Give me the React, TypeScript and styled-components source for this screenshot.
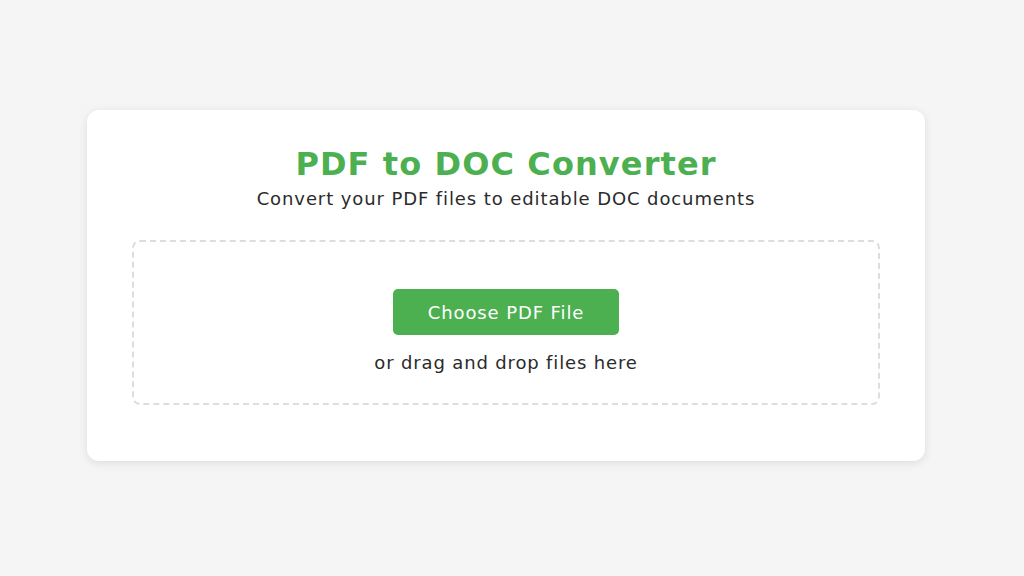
import React from 'react';
import styled, { createGlobalStyle } from 'styled-components';

const GlobalStyle = createGlobalStyle`
  html, body {
    margin: 0;
    padding: 0;
    background: #f5f5f5;
    font-family: "DejaVu Sans", "Open Sans", sans-serif;
  }
`;

const Page = styled.div`
  height: 576px;
  box-sizing: border-box;
  padding: 110px 99px 0 87px;
`;

const Card = styled.div`
  background: #fff;
  border-radius: 12px;
  box-shadow: 0 2px 10px rgba(0, 0, 0, 0.1);
  height: 351px;
  box-sizing: border-box;
  padding: 34px 45px 0;
  display: flex;
  flex-direction: column;
  align-items: center;
`;

const Title = styled.h1`
  margin: 0;
  color: #4caf50;
  font-size: 32px;
  font-weight: 700;
  line-height: 40px;
  letter-spacing: 1.1px;
`;

const Subtitle = styled.p`
  margin: 3px 0 0;
  color: #2b2b2b;
  font-size: 18px;
  line-height: 24px;
  letter-spacing: 0.9px;
`;

const DropZone = styled.div`
  margin-top: 29px;
  align-self: stretch;
  height: 165px;
  box-sizing: border-box;
  border: 2px dashed #ddd;
  border-radius: 8px;
  display: flex;
  flex-direction: column;
  align-items: center;
  padding-top: 47px;
`;

const ChooseButton = styled.button`
  width: 226px;
  height: 46px;
  border: none;
  border-radius: 5px;
  background: #4caf50;
  color: #fff;
  font-family: inherit;
  font-size: 18px;
  letter-spacing: 0.9px;
  cursor: pointer;
`;

const Hint = styled.p`
  margin: 16px 0 0;
  color: #2b2b2b;
  font-size: 18px;
  line-height: 24px;
  letter-spacing: 0.85px;
`;

export default function App() {
  return (
    <>
      <GlobalStyle />
      <Page>
        <Card>
          <Title>PDF to DOC Converter</Title>
          <Subtitle>Convert your PDF files to editable DOC documents</Subtitle>
          <DropZone>
            <ChooseButton>Choose PDF File</ChooseButton>
            <Hint>or drag and drop files here</Hint>
          </DropZone>
        </Card>
      </Page>
    </>
  );
}
